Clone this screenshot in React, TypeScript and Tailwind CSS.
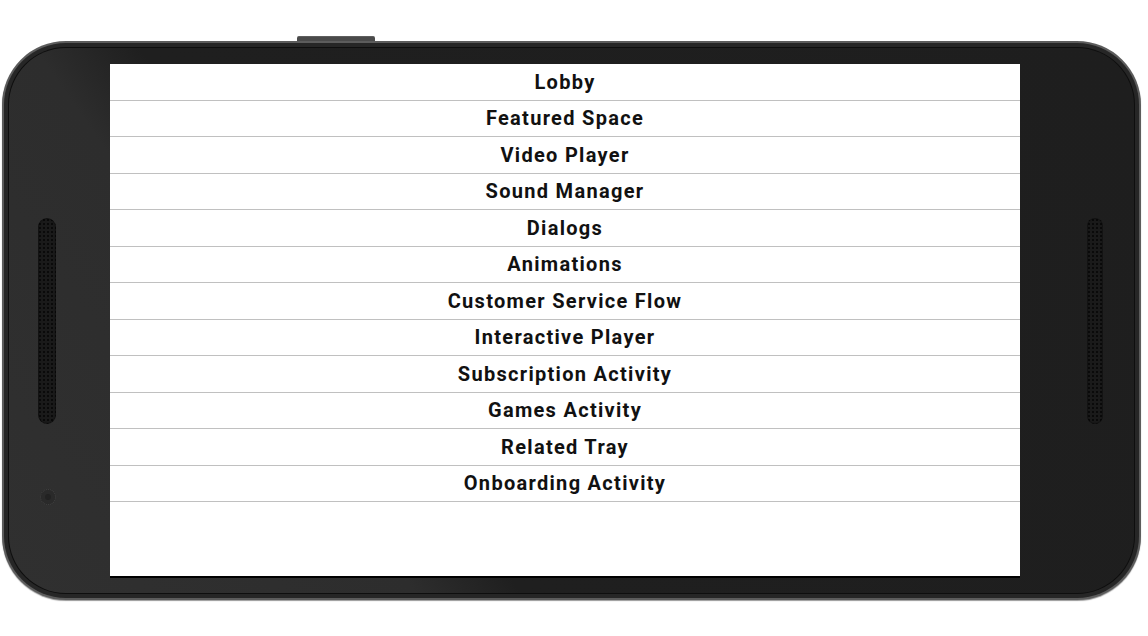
import React from "react";

const items = [
  "Lobby",
  "Featured Space",
  "Video Player",
  "Sound Manager",
  "Dialogs",
  "Animations",
  "Customer Service Flow",
  "Interactive Player",
  "Subscription Activity",
  "Games Activity",
  "Related Tray",
  "Onboarding Activity",
];

function Speaker({ w }: { w: string }) {
  return (
    <div
      className={`${w} h-[206px] rounded-full bg-[#1a1a1a] bg-[radial-gradient(circle,#0a0a0a_1px,transparent_1.3px)] bg-[length:4px_4px] shadow-[inset_0_0_2px_#000]`}
    />
  );
}

export default function App() {
  return (
    <div className="w-[1148px] h-[636px] bg-white overflow-hidden flex flex-col">
      <div className="ml-[297px] mt-[36px] w-[78px] h-[5px] rounded-t-[2px] bg-[#4a4a4a] border-t border-[#5e5e5e]" />
      <div className="ml-[2px] w-[1139px] h-[559px] rounded-[64px] bg-[#5c5c5c] p-[2px] shadow-[0_1px_1px_#9a9a9a]">
        <div className="w-full h-full rounded-[62px] bg-[#262626] p-[4px]">
          <div className="w-full h-full rounded-[58px] bg-[#0e0e0e] p-[1px]">
            <div className="w-full h-full rounded-[57px] bg-[linear-gradient(55deg,#303030_0%,#2d2d2d_27%,#1f1f1f_34%,#1e1e1e_100%)] flex">
              <div className="relative w-[101px] flex flex-col justify-center pl-[29px]">
                <Speaker w="w-[18px]" />
                <div className="absolute left-[31px] top-[441px] w-[16px] h-[16px] rounded-full bg-[#2a2a2a] border border-dotted border-[#444]">
                  <div className="m-[4px] w-[6px] h-[6px] rounded-full bg-[#222]" />
                </div>
              </div>
              <div className="flex flex-col pt-[16px]">
                <div className="w-[910px] h-[514px] bg-white border-b-2 border-black flex flex-col">
                  {items.map((t) => (
                    <div
                      key={t}
                      className="h-[36.5px] shrink-0 border-b border-[#c0c0c0] flex items-center justify-center text-[20px] tracking-[1.3px] font-bold text-[#111] font-['Roboto',sans-serif]"
                    >
                      {t}
                    </div>
                  ))}
                </div>
              </div>
              <div className="w-[114px] flex flex-col justify-center pl-[67px]">
                <Speaker w="w-[16px]" />
              </div>
            </div>
          </div>
        </div>
      </div>
    </div>
  );
}
